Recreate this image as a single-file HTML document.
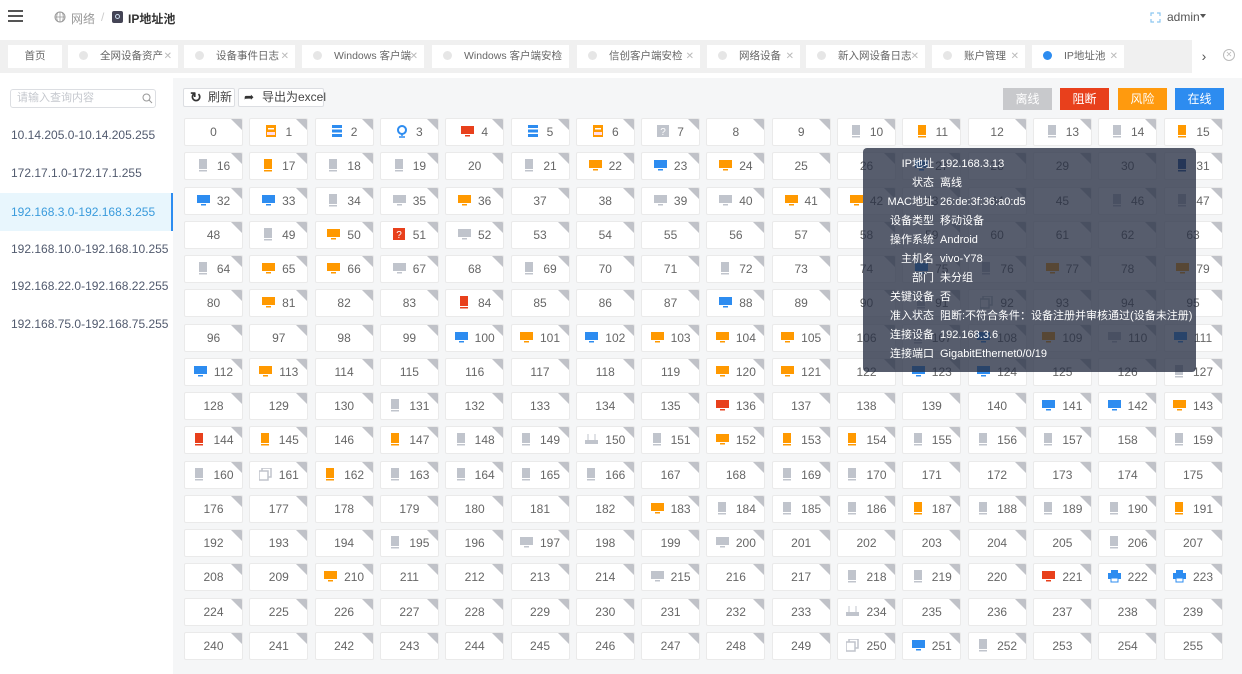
<!DOCTYPE html>
<html><head><meta charset="utf-8">
<style>
*{box-sizing:border-box;margin:0;padding:0}
body{width:1242px;height:674px;overflow:hidden;background:#fff;font-family:"Liberation Sans","Noto Sans CJK SC",sans-serif;color:#515a6e;font-size:12px;position:relative}
.abs{position:absolute;white-space:nowrap}
.tab{position:absolute;top:45px;height:23px;background:#fff;font-size:10.5px;color:#666;line-height:23px;padding-left:11px;white-space:nowrap}
.tab .d{display:inline-block;width:9px;height:9px;border-radius:50%;background:#e6e6e6;vertical-align:-1px;margin-right:12px}
.tab .x{position:absolute;right:6px;top:0;color:#bbb;font-size:10px}
.side{position:absolute;left:0;width:173px;height:38px;line-height:38px;padding-left:11px;font-size:12px;color:#515a6e;white-space:nowrap}
.cell{position:absolute;width:59px;height:28px;background:#fff;border:1px solid #eaeaea;border-radius:2px;font-size:12px;color:#666;line-height:26px;text-align:center;overflow:hidden;white-space:nowrap}
.cell:after{content:"";position:absolute;right:0;top:0;border-top:11px solid #c0c2c8;border-left:11px solid transparent}
.cell svg{vertical-align:-2px;margin-right:7px}
.btn{position:absolute;top:88px;width:49px;height:22px;color:#fff;text-align:center;line-height:22px;font-size:12px}
.tt{position:absolute;left:863px;top:148px;width:333px;height:224px;background:rgba(40,48,68,0.78);border-radius:4px;color:#fff;font-size:11px}
.tt div{position:absolute;left:0;height:19px;line-height:19px;white-space:nowrap}
.tt b{display:inline-block;width:71px;text-align:right;font-weight:normal;margin-right:6px}
</style></head><body>
<div class="abs" style="left:8px;top:10px;width:15px;height:2px;background:#555;box-shadow:0 5px 0 #555,0 10px 0 #555"></div>
<svg class="abs" style="left:54px;top:11px" width="12" height="12" viewBox="0 0 12 12"><circle cx="6" cy="6" r="5" fill="none" stroke="#999"/><path d="M1 6h10M6 1v10M3.5 2c-1 2.5-1 5.5 0 8M8.5 2c1 2.5 1 5.5 0 8" stroke="#999" fill="none" stroke-width=".8"/></svg>
<div class="abs" style="left:71px;top:10px;color:#999;font-size:12px">网络</div>
<div class="abs" style="left:101px;top:10px;color:#ccc;font-size:12px">/</div>
<div class="abs" style="left:112px;top:11px;width:11px;height:12px;background:#445;border-radius:2px"><div style="margin:3px;width:5px;height:5px;border:1px solid #cde;border-radius:50%"></div></div>
<div class="abs" style="left:128px;top:10px;color:#333;font-size:12px;font-weight:bold">IP地址池</div>
<svg class="abs" style="left:1150px;top:12px" width="11" height="11" viewBox="0 0 11 11"><path d="M1 4V1h3M7 1h3v3M10 7v3H7M4 10H1V7" stroke="#8cc6f0" fill="none" stroke-width="1.2"/></svg>
<div class="abs" style="left:1167px;top:10px;color:#555;font-size:12px">admin</div>
<div class="abs" style="left:1200px;top:14px;border-top:4px solid #555;border-left:3.5px solid transparent;border-right:3.5px solid transparent"></div>
<div class="abs" style="left:0;top:40px;width:1242px;height:33px;background:#f0f0f0"></div>
<div class="tab" style="left:8px;width:54px;padding-left:0;text-align:center">首页</div>
<div class="tab" style="left:68px;width:110px"><span class="d"></span>全网设备资产<span class="x">✕</span></div>
<div class="tab" style="left:184px;width:111px"><span class="d"></span>设备事件日志<span class="x">✕</span></div>
<div class="tab" style="left:302px;width:122px"><span class="d"></span>Windows 客户端<span class="x">✕</span></div>
<div class="tab" style="left:432px;width:137px"><span class="d"></span>Windows 客户端安检<span class="x">✕</span></div>
<div class="tab" style="left:577px;width:123px"><span class="d"></span>信创客户端安检<span class="x">✕</span></div>
<div class="tab" style="left:707px;width:93px"><span class="d"></span>网络设备<span class="x">✕</span></div>
<div class="tab" style="left:806px;width:119px"><span class="d"></span>新入网设备日志<span class="x">✕</span></div>
<div class="tab" style="left:932px;width:93px"><span class="d"></span>账户管理<span class="x">✕</span></div>
<div class="tab" style="left:1032px;width:92px"><span class="d" style="background:#2d8cf0"></span>IP地址池<span class="x">✕</span></div>
<div class="abs" style="left:1192px;top:40px;width:24px;height:33px;background:#fff;color:#555;font-size:14px;line-height:33px;text-align:center">›</div>
<div class="abs" style="left:1216px;top:40px;width:26px;height:33px;background:#fff"></div>
<div class="abs" style="left:1223px;top:49px;width:12px;height:12px;border:1px solid #bbb;border-radius:50%;color:#bbb;font-size:8px;line-height:10px;text-align:center">✕</div>
<div class="abs" style="left:0;top:78px;width:173px;height:596px;background:#fff"></div>
<div class="abs" style="left:173px;top:78px;width:1069px;height:596px;background:#f5f6f7"></div>
<div class="abs" style="left:10px;top:89px;width:146px;height:19px;border:1px solid #dcdee2;border-radius:3px;color:#c5c8ce;font-size:11px;line-height:17px;padding-left:6px">请输入查询内容</div>
<svg class="abs" style="left:142px;top:93px" width="11" height="11" viewBox="0 0 11 11"><circle cx="4.5" cy="4.5" r="3.5" fill="none" stroke="#999"/><path d="M7 7l3 3" stroke="#999"/></svg>
<div class="side" style="top:116px">10.14.205.0-10.14.205.255</div>
<div class="side" style="top:154px">172.17.1.0-172.17.1.255</div>
<div class="side" style="top:193px;background:#e8f6fd;color:#3a9bdc;border-right:2px solid #2d8cf0">192.168.3.0-192.168.3.255</div>
<div class="side" style="top:230px">192.168.10.0-192.168.10.255</div>
<div class="side" style="top:267px">192.168.22.0-192.168.22.255</div>
<div class="side" style="top:305px">192.168.75.0-192.168.75.255</div>
<div class="abs" style="left:183px;top:88px;width:52px;height:19px;background:#fff;border:1px solid #dcdee2;border-radius:2px;font-size:12px;color:#444;line-height:17px;padding-left:24px">刷新</div>
<div class="abs" style="left:190px;top:89px;font-size:14px;font-weight:bold;color:#333;line-height:16px">↻</div>
<div class="abs" style="left:238px;top:88px;width:86px;height:19px;background:#fff;border:1px solid #dcdee2;border-radius:2px;font-size:12px;color:#444;line-height:17px;padding-left:23px">导出为excel</div>
<div class="abs" style="left:244px;top:90px;font-size:12px;color:#333;line-height:14px">➦</div>
<div class="btn" style="left:1003px;background:#c8c9cc">离线</div>
<div class="btn" style="left:1060px;background:#e8401c">阻断</div>
<div class="btn" style="left:1118px;background:#ff9a0e">风险</div>
<div class="btn" style="left:1175px;background:#2d8cf0">在线</div>
<div id="grid"></div>
<div class="tt">
<div style="top:7px"><b>IP地址</b>192.168.3.13</div>
<div style="top:26px"><b>状态</b>离线</div>
<div style="top:45px"><b>MAC地址</b>26:de:3f:36:a0:d5</div>
<div style="top:64px"><b>设备类型</b>移动设备</div>
<div style="top:83px"><b>操作系统</b>Android</div>
<div style="top:102px"><b>主机名</b>vivo-Y78</div>
<div style="top:121px"><b>部门</b>未分组</div>
<div style="top:140px"><b>关键设备</b>否</div>
<div style="top:159px"><b>准入状态</b>阻断:不符合条件：设备注册并审核通过(设备未注册)</div>
<div style="top:178px"><b>连接设备</b>192.168.3.6</div>
<div style="top:197px"><b>连接端口</b>GigabitEthernet0/0/19</div>
</div>
<script>
var C={g:"#c0c4cc",o:"#ff9900",b:"#2d8cf0",r:"#e8401c",d:"#1f4e9c"};
var map="1Bo 2Sb 3Cb 4Mr 5Sb 6Bo 7Qg 10Pg 11Po 13Pg 14Pg 15Po 16Pg 17Po 18Pg 19Pg 21Pg 22Mo 23Mb 24Mo 27Mb 31Pd 32Mb 33Mb 34Pg 35Mg 36Mo 39Mg 40Mg 41Mo 42Mo 46Pg 47Pg 49Pg 50Mo 51Qr 52Mg 64Pg 65Mo 66Mo 67Mg 69Pg 72Pg 75Mb 76Pg 77Mo 79Mo 81Mo 84Pr 88Mb 91Pg 92Kg 100Mb 101Mo 102Mb 103Mo 104Mo 105Mo 107Pg 108Mb 109Mo 110Mg 111Mb 112Mb 113Mo 120Mo 121Mo 123Mb 124Mb 127Pg 131Pg 136Mr 141Mb 142Mb 143Mo 144Pr 145Po 147Po 148Pg 149Pg 150Wg 151Pg 152Mo 153Po 154Po 155Pg 156Pg 157Pg 159Pg 160Pg 161Kg 162Po 163Pg 164Pg 165Pg 166Pg 169Pg 170Pg 183Mo 184Pg 185Pg 186Pg 187Po 188Pg 189Pg 190Pg 191Po 195Pg 197Mg 200Mg 206Pg 210Mo 215Mg 218Pg 219Pg 221Mr 222Rb 223Rb 234Wg 250Kg 251Mb 252Pg";
var m={};map.split(" ").forEach(function(s){var t=s.match(/(\d+)(\w)(\w)/);m[t[1]]=[t[2],C[t[3]]];});
function icon(t,c){
 var p={P:'<rect x="2" y="0" width="8" height="10" fill="'+c+'"/><rect x="2" y="11" width="8" height="1.5" fill="'+c+'"/>',
 M:'<rect x="0" y="1" width="13" height="8" fill="'+c+'"/><rect x="4" y="10" width="5" height="1.5" fill="'+c+'"/>',
 S:'<rect x="1" y="0" width="10" height="3" fill="'+c+'"/><rect x="1" y="4.5" width="10" height="3" fill="'+c+'"/><rect x="1" y="9" width="10" height="3" fill="'+c+'"/>',
 C:'<circle cx="6" cy="5" r="4" fill="none" stroke="'+c+'" stroke-width="2"/><path d="M6 9v2M3 12h6" stroke="'+c+'" stroke-width="1.5"/>',
 B:'<rect x="1" y="0" width="10" height="12" fill="'+c+'"/><rect x="3" y="3" width="6" height="1.5" fill="#fff"/><rect x="2" y="7" width="8" height="3" fill="#fde"/>',
 Q:'<rect x="0" y="0" width="12" height="12" fill="'+c+'"/><text x="6" y="10" font-size="10" fill="#fff" text-anchor="middle" font-family="Liberation Sans">?</text>',
 W:'<rect x="0" y="7" width="13" height="4" fill="'+c+'"/><path d="M3 7V1M10 7V1" stroke="'+c+'"/>',
 K:'<rect x="3" y="0" width="9" height="9" fill="none" stroke="'+c+'" stroke-width="1.5"/><rect x="0" y="3" width="9" height="9" fill="#fff" stroke="'+c+'" stroke-width="1.5"/>',
 R:'<rect x="3" y="0" width="7" height="3" fill="'+c+'"/><rect x="0" y="3" width="13" height="6" fill="'+c+'"/><rect x="3" y="8" width="7" height="4" fill="#fff" stroke="'+c+'"/>'}[t];
 return '<svg width="13" height="13" viewBox="0 0 13 13">'+p+'</svg>';
}
var h="";
for(var i=0;i<256;i++){var r=Math.floor(i/16),c=i%16;var x=184+c*65.3,y=118+r*34.25;
 var ic=m[i]?icon(m[i][0],m[i][1]):"";
 h+='<div class="cell" style="left:'+x.toFixed(1)+'px;top:'+y.toFixed(1)+'px">'+ic+i+'</div>';}
document.getElementById("grid").innerHTML=h;
</script>
</body></html>
